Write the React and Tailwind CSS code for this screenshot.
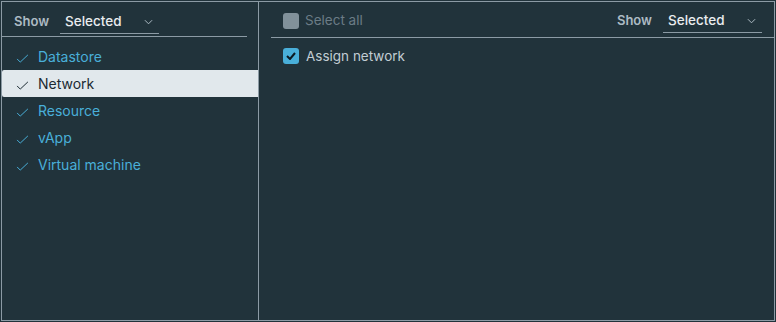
import React, { useState } from 'react'

const categories = ['Datastore', 'Network', 'Resource', 'vApp', 'Virtual machine']

function Check({ className }) {
  return (
    <svg viewBox="0 0 14 10" className={className} fill="none" stroke="currentColor" strokeWidth="1.1">
      <path d="M1 5.5 L4.5 9 L13 1" />
    </svg>
  )
}

function Chevron() {
  return (
    <svg viewBox="0 0 10 6" className="w-[9px] h-[6px] text-[#adbbc4]" fill="none" stroke="currentColor" strokeWidth="1.1">
      <path d="M1 1 L5 5 L9 1" />
    </svg>
  )
}

function ShowSelect({ width }) {
  return (
    <div className="flex items-center">
      <span className="text-[13px] font-semibold text-[#adbbc4]">Show</span>
      <div className={`ml-[11px] ${width} h-[24px] flex items-center justify-between border-b border-[#8c9ba5] pl-[5px] pr-[6px]`}>
        <span className="text-[13.5px] font-medium text-[#e9ecef]">Selected</span>
        <Chevron />
      </div>
    </div>
  )
}

export default function App() {
  const [active, setActive] = useState('Network')

  return (
    <div className="w-[776px] h-[322px] bg-[#21333b] p-px" style={{ fontFamily: 'Inter, "Noto Sans", sans-serif' }}>
      <div className="h-full flex border border-[#8c9ba5]">
        {/* Categories */}
        <div className="w-[257px] flex flex-col border-r border-[#8c9ba5]">
          <div className="h-[35px] mr-[11px] flex items-end pb-[2px] pl-[12px] border-b border-[#8c9ba5]">
            <ShowSelect width="w-[99px]" />
          </div>
          <div className="mt-[6px] flex flex-col">
            {categories.map((c) => {
              const on = c === active
              return (
                <button
                  key={c}
                  onClick={() => setActive(c)}
                  className={`h-[27px] flex items-center pl-[14px] text-left rounded-l-[2px] ${on ? 'bg-[#e1e8ec] text-[#1b2a32]' : 'text-[#49afd9]'}`}
                >
                  <Check className="w-[13px] h-[9px] mt-[4px]" />
                  <span className="ml-[9px] text-[14px]">{c}</span>
                </button>
              )
            })}
          </div>
        </div>

        {/* Privileges */}
        <div className="flex-1 flex flex-col">
          <div className="h-[36px] ml-[12px] flex items-center justify-between border-b border-[#8c9ba5]">
            <div className="flex items-center ml-[12px] mt-[2px]">
              <span className="w-[16px] h-[16px] rounded-[3px] bg-[#8c9ba5] opacity-90" />
              <span className="ml-[6px] text-[13.5px] text-[#6b7c86]">Select all</span>
            </div>
            <div className="mr-[12px] pt-[3px]">
              <ShowSelect width="w-[99px]" />
            </div>
          </div>
          <div className="mt-[8px] ml-[24px] flex items-center">
            <span className="w-[16px] h-[16px] rounded-[3px] bg-[#49afd9] flex items-center justify-center">
              <svg viewBox="0 0 10 8" className="w-[10px] h-[8px]" fill="none" stroke="#0c1a22" strokeWidth="2">
                <path d="M1 4 L4 7 L9 1" />
              </svg>
            </span>
            <span className="ml-[7px] text-[13.5px] text-[#c1cdd4]">Assign network</span>
          </div>
        </div>
      </div>
    </div>
  )
}
